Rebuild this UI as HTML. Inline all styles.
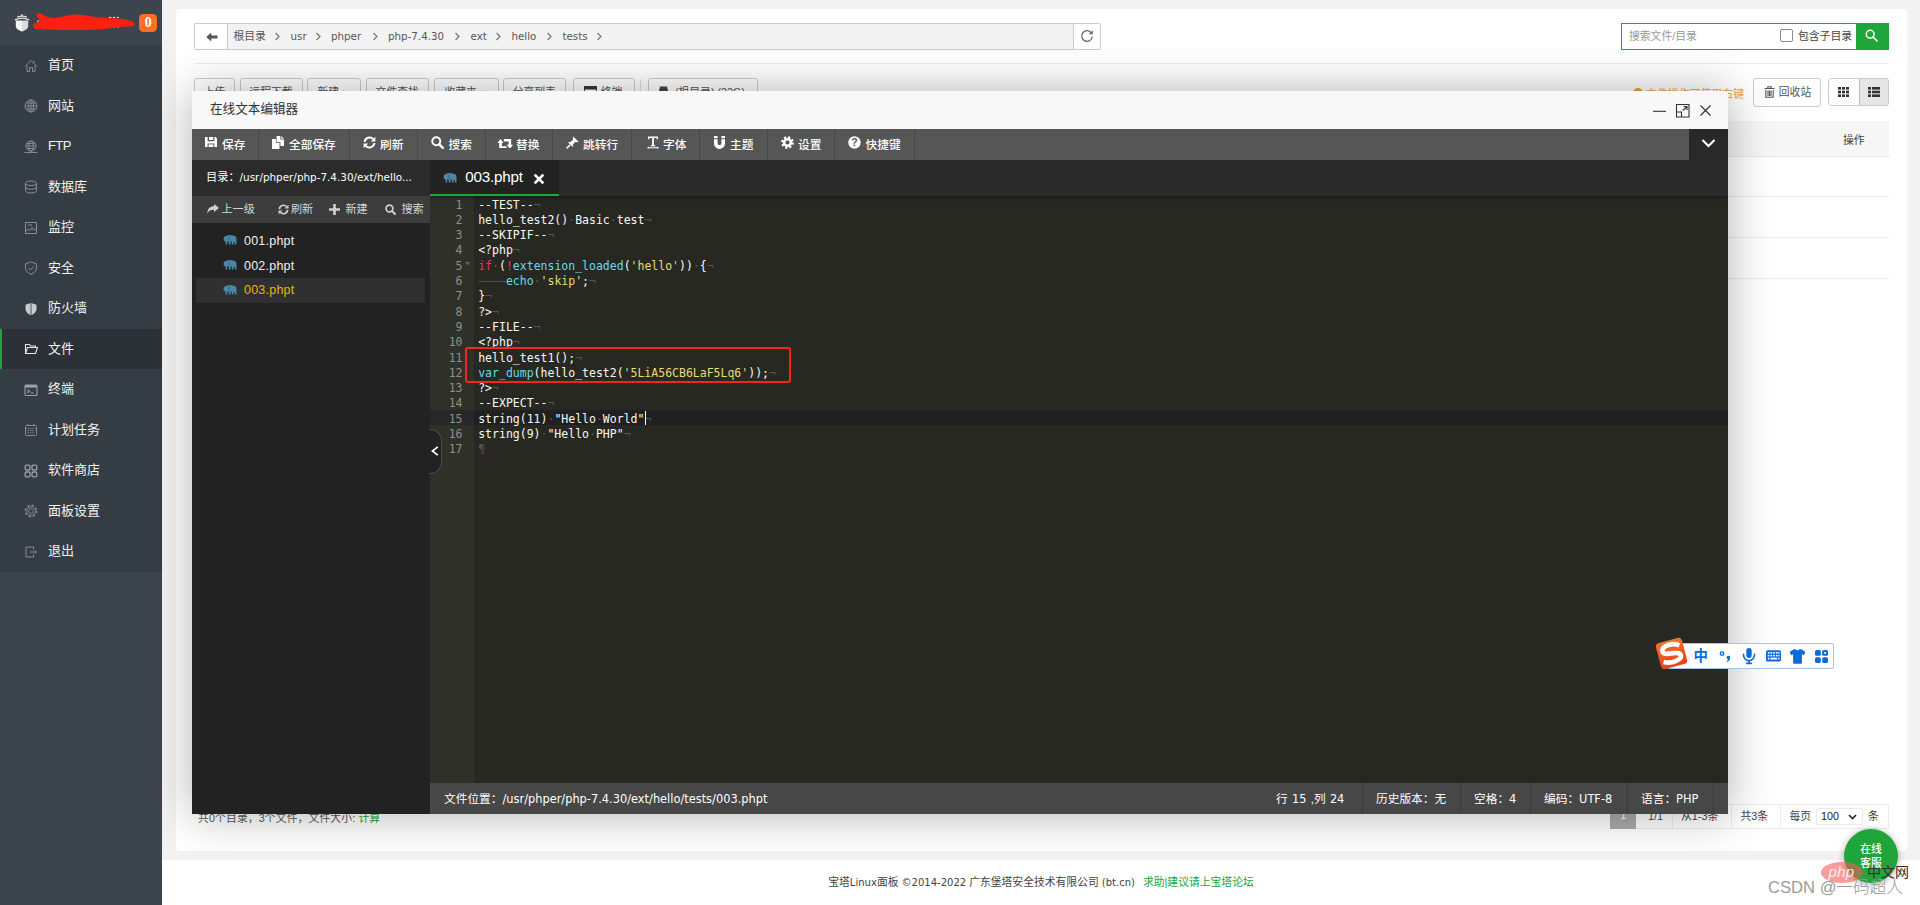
<!DOCTYPE html>
<html lang="zh-CN">
<head>
<meta charset="utf-8">
<title>宝塔Linux面板</title>
<style>
*{box-sizing:border-box;margin:0;padding:0}
html,body{width:1920px;height:905px;overflow:hidden;background:#f2f2f2}
body{font-family:"Liberation Sans","Noto Sans CJK SC",sans-serif;font-size:10.8px;color:#666;position:relative}
.abs{position:absolute}
.la{font-family:"DejaVu Sans","Liberation Sans",sans-serif;font-size:.93em}
svg{display:block}
/* ---------- sidebar ---------- */
#side{position:absolute;left:0;top:0;width:162px;height:905px;background:#3c444d}
#side .hd{position:absolute;left:0;top:0;width:162px;height:45.8px;background:#3c444d}
#side .menu{position:absolute;left:0;top:45.8px;width:162px;height:525.8px;background:#353d44}
#side .mi{margin-top:-.8px;position:absolute;left:0;width:162px;height:40.5px;color:#f2f2f2;font-size:13px;line-height:40.5px;padding-left:48px;white-space:nowrap}
#side .mi.on{background:#2c3138;border-left:2px solid #20a53a;padding-left:46px}
#side .mi svg{position:absolute;left:24px;top:13.5px}
#side .mi.on svg{left:22px}
.badge{position:absolute;left:139px;top:13.7px;width:18.3px;height:18.3px;border-radius:4.5px;background:#fc6d26;color:#fff;font:bold 14px/18px "Liberation Serif",serif;text-align:center}
/* ---------- main ---------- */
#panel{position:absolute;left:176px;top:9px;width:1731px;height:842px;background:#fff;border-radius:4px}
#foot{position:absolute;left:162px;top:860px;width:1758px;height:45px;background:#fff}
#foot .t{position:absolute;left:0;top:15px;width:1758px;text-align:center;font-size:10.8px;line-height:14px;color:#444;white-space:nowrap}
#foot .t a{color:#20a53a;margin-left:8px}

/* path bar */
#path{position:absolute;left:194px;top:23px;width:907px;height:27px;border:1px solid #ccc;border-radius:2px;background:#f3f3f3}
#path .back{position:absolute;left:0;top:0;width:33px;height:25px;background:#fff;border-right:1px solid #ccc}
#path .rf{position:absolute;right:0;top:0;width:27px;height:25px;background:#fff;border-left:1px solid #ccc}
#path .c .la{font-size:.955em}
#path .c{position:absolute;top:0;height:25px;line-height:24px;font-size:10.8px;color:#555;white-space:nowrap}
#path .g{position:absolute;top:8px}
#hr1{position:absolute;left:194px;top:63px;width:1695px;height:1px;background:#ececec}
#search{position:absolute;left:1621px;top:23px;width:268px;height:27px;border:1px solid #20a53a;background:#fff}
#search .ph{position:absolute;left:7px;top:0;line-height:24px;font-size:10.8px;color:#999}
#search .cb{position:absolute;left:158px;top:4.8px;width:13px;height:13.4px;border:1px solid #8a8a8a;border-radius:2px;background:#fff}
#search .lb{position:absolute;left:176px;top:0;line-height:24px;font-size:10.8px;color:#444;white-space:nowrap}
#search .go{position:absolute;right:-1px;top:-1px;width:33px;height:27px;background:#20a53a}
.tb{position:absolute;top:78px;height:27.5px;border:1px solid #ccc;border-radius:3px;background:#fff;font-size:10.8px;color:#555;line-height:26.6px;text-align:center;white-space:nowrap}
#tip{position:absolute;left:1632.5px;top:85.5px;letter-spacing:.1px;font-size:10.8px;line-height:16px;color:#e6a23c;white-space:nowrap}
#thead{position:absolute;left:194px;top:120.5px;width:1695px;height:36px;background:#f6f6f6;border-bottom:1px solid #e6e6e6}
.rl{position:absolute;left:194px;width:1695px;height:1px;background:#ededed}
#pg>span,#pg>div{margin-top:.6px}
#pg{position:absolute;left:1610px;top:803.9px;height:25px;width:279px;border:1px solid #ececec;font-size:10.8px;color:#444;line-height:23px;white-space:nowrap}
#pg>span{position:absolute;top:0}
#pg>i{position:absolute;top:0;width:1px;height:23px;background:#ececec}
#stat{position:absolute;left:198px;top:810.3px;letter-spacing:.12px;font-size:10.8px;line-height:16px;color:#555;white-space:nowrap}
#kf{position:absolute;left:1844px;top:829px;width:54px;height:54px;border-radius:27px;background:#20a53a;color:#fff;font-size:10.8px;line-height:14px;text-align:center;padding-top:13px;font-weight:500;box-shadow:0 1px 7px rgba(0,0,0,.35)}

/* ---------- modal ---------- */
#kf{z-index:5}
#modal{position:absolute;left:192px;top:91px;width:1536px;height:722.6px;background:#f8f8f8;box-shadow:0.9px 0.9px 45px rgba(0,0,0,.3);z-index:10;border-radius:2px 2px 0 0}
#modal .ttl{position:absolute;left:18px;top:0;line-height:37px;font-size:12.6px;color:#333;white-space:nowrap}
#mtb{position:absolute;left:0;top:38px;width:1536px;height:31px;background:#565656}
#mtb .it{position:absolute;top:0;height:31px;border-right:1px solid #484848;color:#fff;font-size:11.7px;font-weight:500;line-height:31.5px;white-space:nowrap}
#mtb .it svg{position:absolute}
#mtb .it>span{position:absolute;top:0}
#mtb .more{position:absolute;left:1497px;top:0;width:39px;height:31px;background:#292929}
#lp{position:absolute;left:0;top:69px;width:238px;height:653.6px;background:#222}
#lp .dir{position:absolute;left:0;top:0;width:238px;height:35.7px;background:#2b2b2b;color:#fff;font-size:11.2px;line-height:35px;padding-left:14px;white-space:nowrap}
#lp .st{position:absolute;left:0;top:35.7px;width:238px;height:27px;background:#3d3d3d;color:#d4d4d4;font-size:11.1px;line-height:27px;white-space:nowrap}
#lp .st>span{position:absolute;top:0}
#lp .st svg{position:absolute}
#lp .f{position:absolute;left:4px;width:229px;height:24.2px;color:#f0f0f0;font-size:12.5px;line-height:22.4px;padding-left:48px;white-space:nowrap;letter-spacing:.22px}
#lp .f.on{background:#303030;color:#e6b700}
#lp .f svg{position:absolute;left:26.8px;top:5.6px}
#lp .f.on svg{top:6.9px}
#ed{position:absolute;left:238px;top:69px;width:1298px;height:653.6px;background:#272822;overflow:hidden}
#ed .tabs{position:absolute;left:0;top:0;width:1298px;height:36px;background:#2a2a2a;box-shadow:0 1px 5px rgba(0,0,0,.45);z-index:2}
#ed .tab{position:absolute;left:0;top:0;width:129px;height:36px;background:#222;border-bottom:2.5px solid #20a53a;color:#fff;font-size:14.6px;line-height:34px;white-space:nowrap}
#ed .gut{position:absolute;left:0;top:36px;width:44px;height:587px;background:#2f3129}
#ed .al{position:absolute;left:0;top:250.2px;width:1298px;height:15.3px;background:#202020}
#ed .alg{position:absolute;left:0;top:250.2px;width:44px;height:15.3px;background:#272727}
#ed .ln,#ed .cl{position:absolute;font-family:"DejaVu Sans Mono","Liberation Mono",monospace;font-size:11.5px;line-height:15.3px;height:15.3px;white-space:pre}
#ed .ln,#ed .cl{margin-top:1.4px}
#ed .ln{left:0;width:32.5px;text-align:right;color:#8f908a}
#ed .cl{left:48.2px;color:#f8f8f2}
#ed .cl i{font-style:normal;color:#55564f}
#ed .cl b{font-weight:normal;color:#f92672}
#ed .cl u{text-decoration:none;color:#66d9ef}
#ed .cl s{text-decoration:none;color:#e6db74}
#sb{position:absolute;left:0;top:623.2px;width:1298px;height:30.4px;background:#474747;color:#fff;font-size:11.7px;line-height:32.5px;white-space:nowrap}
#sb .la{font-size:.975em}
#sb>span{word-spacing:1px;position:absolute;top:0}
#sb>i{position:absolute;top:0;width:1px;height:30.4px;background:#3a3a3a}
#fold{position:absolute;left:237px;top:338px;width:12.8px;height:44.5px;background:#222;border-radius:0 12px 12px 0;z-index:3;border:1px solid #4a4a4a;border-left:0}
#redbox{position:absolute;left:272.5px;top:256px;width:326px;height:35.8px;border:2.4px solid #f5251d;border-radius:3px;z-index:4}

/* ---------- overlays ---------- */
#ime{position:absolute;left:1667px;top:643px;width:167px;height:26px;background:#fff;border:1px solid #a8c3ea;border-radius:2px;z-index:20}
#imes{position:absolute;left:1658px;top:640px;width:27px;height:27px;border-radius:4px;background:linear-gradient(#f4702f,#e8431a);transform:rotate(-15deg);z-index:21}
#imei{position:absolute;left:1690px;top:645px;z-index:22}
#zh{position:absolute;left:1693.5px;top:645.5px;z-index:22;font:bold 14.5px/20px "Liberation Sans","Noto Sans CJK SC",sans-serif;color:#0b6bd8}
#wm1{position:absolute;left:1820.5px;top:862px;width:42px;height:21px;border-radius:50%;background:rgba(243,90,90,.6);z-index:30;color:rgba(255,255,255,.88);font:italic 15px/19px "Liberation Sans",sans-serif;text-align:center;letter-spacing:.3px}
#wm2{position:absolute;left:1867px;top:861px;z-index:30;font:400 14px/22px "Liberation Sans","Noto Sans CJK SC",sans-serif;color:#3b2b2b;white-space:nowrap}
#wm3{position:absolute;left:1768px;top:876px;z-index:30;font:300 16.6px/24px "Liberation Sans","Noto Sans CJK SC",sans-serif;color:#9a9a9a;white-space:nowrap}
</style>
</head>
<body>
<!-- SIDEBAR -->
<div id="side">
  <div class="hd">
    <svg class="abs" style="left:14px;top:13.5px" width="16" height="18" viewBox="0 0 16 18"><path d="M8 0.3 V2.2" stroke="#e6e6e6" stroke-width="1.3"/><path d="M3.2 3.2 Q8 1.2 12.8 3.2 M0.8 5.8 Q8 2.6 15.2 5.8" stroke="#dedede" stroke-width="1.3" fill="none"/><path d="M1.8 6.6 H8 V17.6 C5 16.4 1.8 14.8 1.8 12 Z" fill="#f4f4f4"/><path d="M8 6.6 H14.2 V12 C14.2 14.8 11 16.4 8 17.6 Z" fill="#dcdcdc"/></svg>
    <svg class="abs" style="left:30px;top:10px" width="108" height="24" viewBox="30 10 108 24"><path d="M109 17.4 H119 M109 26.8 H119 M37 21.5 L41 20" stroke="#e4e4e4" stroke-width="1" stroke-dasharray="2.4 1.6"/><path d="M36.6 14.6 C37 12.4 40 12.6 42 14.2 C47 17.4 52 18.6 58 17.6 C66 15.2 76 13.6 84 15 C92 16.8 102 18 114 18.2 C122 18.6 130 19.6 134 22.4 C135.4 24.4 134 26.4 131 26.6 C122 26.6 112 27.4 106 28.8 C96 30 84 30.2 72 30 C60 29.8 48 29.8 38 29.4 C33.6 29.2 32 26.6 33.4 24.2 C35 22.4 38.6 22 41 21 C38.6 19 36.2 17 36.6 14.6 Z" fill="#fd1f10"/></svg>
    <div class="badge">0</div>
  </div>
  <div class="menu">
    <div class="mi" style="top:0.0px"><svg width="14" height="14" viewBox="0 0 14 14"><path d="M1 7.5 L7 1.5 L13 7.5 M3 6.5 V12.5 H5.5 V8.5 H8.5 V12.5 H11 V6.5 M10 2 V4" stroke="#858b92" stroke-width="1" fill="none"/></svg>首页</div>
    <div class="mi" style="top:40.5px"><svg width="14" height="14" viewBox="0 0 14 14"><circle cx="7" cy="7" r="6" stroke="#858b92" stroke-width="1" fill="none"/><ellipse cx="7" cy="7" rx="2.6" ry="6" stroke="#858b92" stroke-width="1" fill="none"/><path d="M1 7 H13 M2 4 H12 M2 10 H12 M7 1 V13" stroke="#858b92" stroke-width="1" fill="none"/></svg>网站</div>
    <div class="mi" style="top:81.0px"><svg width="14" height="14" viewBox="0 0 14 14"><circle cx="7" cy="6" r="5" stroke="#858b92" stroke-width="1" fill="none"/><ellipse cx="7" cy="6" rx="2.2" ry="5" stroke="#858b92" stroke-width="1" fill="none"/><path d="M2 6 H12 M3 3.5 H11 M3 8.5 H11 M0.5 12.5 H13.5 M7 11 V12.5" stroke="#858b92" stroke-width="1" fill="none"/></svg><span style="letter-spacing:-.6px">FTP</span></div>
    <div class="mi" style="top:121.5px"><svg width="14" height="14" viewBox="0 0 14 14"><ellipse cx="7" cy="3.3" rx="5.5" ry="2.3" stroke="#858b92" stroke-width="1" fill="none"/><path d="M1.5 3.3 V10.7 C1.5 13.7 12.5 13.7 12.5 10.7 V3.3 M1.5 7 C1.5 10 12.5 10 12.5 7 M1.5 10.7" stroke="#858b92" stroke-width="1" fill="none"/></svg>数据库</div>
    <div class="mi" style="top:162.0px"><svg width="14" height="14" viewBox="0 0 14 14"><rect x="1.5" y="1.5" width="11" height="11" stroke="#858b92" stroke-width="1" fill="none"/><path d="M2 10 L4.5 8 L6 9.5 L8 6.5 L9.5 9 L12 8 M4 4 H8" stroke="#858b92" stroke-width="1" fill="none"/></svg>监控</div>
    <div class="mi" style="top:202.5px"><svg width="14" height="14" viewBox="0 0 14 14"><path d="M7 1 L12.5 2.8 V7 C12.5 10 10 12 7 13.3 C4 12 1.5 10 1.5 7 V2.8 Z M4.5 7 L6.5 9 L10 5.2" stroke="#858b92" stroke-width="1" fill="none"/></svg>安全</div>
    <div class="mi" style="top:243.0px"><svg width="14" height="14" viewBox="0 0 14 14"><path d="M7 1 L12.5 2.8 V7 C12.5 10 10 12 7 13.3 C4 12 1.5 10 1.5 7 V2.8 Z" fill="#c9ccce"/><path d="M7 1 V13.3" stroke="#353d44" stroke-width="0.8"/></svg>防火墙</div>
    <div class="mi on" style="top:283.5px"><svg width="14" height="14" viewBox="0 0 14 14"><path d="M1.5 11.5 V2.5 H5.5 L6.5 4 H11.5 V5.5 M1.5 11.5 L3.5 5.5 H13.5 L11.5 11.5 Z" stroke="#e8e8e8" stroke-width="1.1" fill="none"/></svg>文件</div>
    <div class="mi" style="top:324.0px"><svg width="14" height="14" viewBox="0 0 14 14"><rect x="1" y="2" width="12" height="10.5" rx="1" stroke="#9ba0a6" stroke-width="1.1" fill="none"/><rect x="1" y="2" width="12" height="2.6" fill="#9ba0a6"/><path d="M3.4 6.6 L5.6 8.2 L3.4 9.8 M6.6 10 H9.6" stroke="#9ba0a6" stroke-width="1.1" fill="none"/></svg>终端</div>
    <div class="mi" style="top:364.5px"><svg width="14" height="14" viewBox="0 0 14 14"><rect x="1.5" y="2.5" width="11" height="10" rx="1" stroke="#858b92" stroke-width="1" fill="none"/><path d="M1.5 5.5 H12.5 M4 1 V3.5 M10 1 V3.5 M3.5 7.5 H10.5 M3.5 9.8 H10.5" stroke="#858b92" stroke-width="1" fill="none" stroke-dasharray="1.4 1"/></svg>计划任务</div>
    <div class="mi" style="top:405.0px"><svg width="14" height="14" viewBox="0 0 14 14"><rect x="1.2" y="1.2" width="4.8" height="4.8" rx="1.2" stroke="#9ba0a6" stroke-width="1.3" fill="none"/><rect x="8" y="1.2" width="4.8" height="4.8" rx="1.2" stroke="#9ba0a6" stroke-width="1.3" fill="none"/><rect x="1.2" y="8" width="4.8" height="4.8" rx="1.2" stroke="#9ba0a6" stroke-width="1.3" fill="none"/><rect x="8" y="8" width="4.8" height="4.8" rx="1.2" stroke="#9ba0a6" stroke-width="1.3" fill="none"/></svg>软件商店</div>
    <div class="mi" style="top:445.5px"><svg width="14" height="14" viewBox="0 0 14 14"><circle cx="7" cy="7" r="2.4" stroke="#7d838a" stroke-width="1" fill="none"/><circle cx="7" cy="7" r="4.4" stroke="#7d838a" stroke-width="1" fill="none"/><circle cx="7" cy="7" r="5.6" stroke="#7d838a" stroke-width="1.8" fill="none" stroke-dasharray="2.2 2.2"/></svg>面板设置</div>
    <div class="mi" style="top:486.0px"><svg width="14" height="14" viewBox="0 0 14 14"><path d="M9.5 4.5 V2 H2 V12 H9.5 V9.5 M5.5 7 H12.5 M10.5 5 L12.5 7 L10.5 9" stroke="#858b92" stroke-width="1" fill="none"/></svg>退出</div>
  </div>
</div>
<!-- MAIN -->
<div id="panel"></div>
<div id="path">
  <div class="back"><svg class="abs" style="left:11px;top:8px" width="12" height="10" viewBox="0 0 12 10"><path d="M0.3 5 L5.2 0.6 V3.6 H11.5 V6.4 H5.2 V9.4 Z" fill="#555"/></svg></div>
  <span class="c" style="left:38.5px">根目录</span><span class="c" style="left:95.5px"><span class="la">usr</span></span><span class="c" style="left:136px"><span class="la">phper</span></span><span class="c" style="left:193px"><span class="la">php-7.4.30</span></span><span class="c" style="left:275.5px"><span class="la">ext</span></span><span class="c" style="left:316.5px"><span class="la">hello</span></span><span class="c" style="left:367.5px"><span class="la">tests</span></span><svg class="g" style="left:79.0px" width="7" height="9" viewBox="0 0 7 9"><path d="M1.5 1 L5 4.5 L1.5 8" stroke="#777" stroke-width="1.2" fill="none"/></svg><svg class="g" style="left:120.25px" width="7" height="9" viewBox="0 0 7 9"><path d="M1.5 1 L5 4.5 L1.5 8" stroke="#777" stroke-width="1.2" fill="none"/></svg><svg class="g" style="left:176.5px" width="7" height="9" viewBox="0 0 7 9"><path d="M1.5 1 L5 4.5 L1.5 8" stroke="#777" stroke-width="1.2" fill="none"/></svg><svg class="g" style="left:259.0px" width="7" height="9" viewBox="0 0 7 9"><path d="M1.5 1 L5 4.5 L1.5 8" stroke="#777" stroke-width="1.2" fill="none"/></svg><svg class="g" style="left:300.0px" width="7" height="9" viewBox="0 0 7 9"><path d="M1.5 1 L5 4.5 L1.5 8" stroke="#777" stroke-width="1.2" fill="none"/></svg><svg class="g" style="left:351.0px" width="7" height="9" viewBox="0 0 7 9"><path d="M1.5 1 L5 4.5 L1.5 8" stroke="#777" stroke-width="1.2" fill="none"/></svg><svg class="g" style="left:400.5px" width="7" height="9" viewBox="0 0 7 9"><path d="M1.5 1 L5 4.5 L1.5 8" stroke="#777" stroke-width="1.2" fill="none"/></svg>
  <div class="rf"><svg class="abs" style="left:6px;top:4.6px" width="14" height="14" viewBox="0 0 14 14"><path d="M11.6 4.3 A5.3 5.3 0 1 0 12.3 7.5" stroke="#666" stroke-width="1.3" fill="none"/><path d="M12.8 1.2 V5.3 H8.7 Z" fill="#666"/></svg></div>
</div>
<div id="search"><span class="ph">搜索文件/目录</span><span class="cb"></span><span class="lb">包含子目录</span>
  <div class="go"><svg class="abs" style="left:9px;top:6px" width="13" height="13" viewBox="0 0 13 13"><circle cx="5.2" cy="5.2" r="3.9" stroke="#fff" stroke-width="1.5" fill="none"/><path d="M8.2 8.2 L12 12" stroke="#fff" stroke-width="1.7" stroke-linecap="round"/></svg></div>
</div>
<div id="hr1"></div>
<div class="tb" style="left:194px;width:41px">上传</div>
<div class="tb" style="left:239.5px;width:63px">远程下载</div>
<div class="tb" style="left:306.7px;width:54px">新建<svg style="display:inline-block;vertical-align:0px;margin-left:3px" width="8" height="6" viewBox="0 0 8 6"><path d="M1 1 L4 4.4 L7 1" stroke="#555" stroke-width="1.2" fill="none"/></svg></div>
<div class="tb" style="left:365.7px;width:63px">文件查找</div>
<div class="tb" style="left:433.7px;width:65px">收藏夹<svg style="display:inline-block;vertical-align:0px;margin-left:3px" width="8" height="6" viewBox="0 0 8 6"><path d="M1 1 L4 4.4 L7 1" stroke="#555" stroke-width="1.2" fill="none"/></svg></div>
<div class="tb" style="left:502.8px;width:63px">分享列表</div>
<div class="tb" style="left:572.6px;width:62px;padding-left:16px">终端<svg class="abs" style="left:10px;top:7px" width="13" height="11" viewBox="0 0 13 11"><rect x="0.5" y="0.5" width="12" height="10" fill="#fff" stroke="#444"/><rect x="0.5" y="0.5" width="12" height="3" fill="#333"/></svg></div>
<div class="abs" style="left:640px;top:79px;width:1px;height:26px;background:#ddd"></div>
<div class="tb" style="left:648px;width:110px;padding-left:14px">(根目录) (22G)<svg class="abs" style="left:9px;top:7px" width="11" height="11" viewBox="0 0 11 11"><path d="M2 0.5 H9 L10.5 7 V10.5 H0.5 V7 Z" fill="#444"/></svg></div>
<div id="tip"><b style="display:inline-block;width:10.5px;height:10.5px;border-radius:6px;background:#e6a23c;vertical-align:-1px;margin-right:3px"></b>文件操作可使用右键</div>
<div class="tb" style="left:1753px;width:68px;height:28.5px;line-height:27px;padding-left:16px">回收站<svg class="abs" style="left:10px;top:7px" width="11" height="12" viewBox="0 0 11 12"><path d="M0.5 2.5 H10.5 M3.8 2.3 V0.7 H7.2 V2.3 M1.8 4 V11.3 H9.2 V4 M4 4.5 V10 M5.5 4.5 V10 M7 4.5 V10" stroke="#555" stroke-width="1.1" fill="none"/></svg></div>
<div class="tb" style="left:1828px;width:61px;overflow:hidden"><div class="abs" style="left:29.5px;top:0;width:31px;height:27px;background:#e6e6e6;border-left:1px solid #bbb"></div>
  <svg class="abs" style="left:9px;top:8px" width="11" height="10" viewBox="0 0 11 10"><g fill="#333"><rect x="0" y="0" width="3" height="2.6"/><rect x="4" y="0" width="3" height="2.6"/><rect x="8" y="0" width="3" height="2.6"/><rect x="0" y="3.7" width="3" height="2.6"/><rect x="4" y="3.7" width="3" height="2.6"/><rect x="8" y="3.7" width="3" height="2.6"/><rect x="0" y="7.4" width="3" height="2.6"/><rect x="4" y="7.4" width="3" height="2.6"/><rect x="8" y="7.4" width="3" height="2.6"/></g></svg>
  <svg class="abs" style="left:39px;top:8px" width="12" height="10" viewBox="0 0 12 10"><g fill="#333"><rect x="0" y="0" width="3" height="2.6"/><rect x="4" y="0" width="8" height="2.6"/><rect x="0" y="3.7" width="3" height="2.6"/><rect x="4" y="3.7" width="8" height="2.6"/><rect x="0" y="7.4" width="3" height="2.6"/><rect x="4" y="7.4" width="8" height="2.6"/></g></svg>
</div>
<div id="thead"><span class="abs" style="left:1649px;top:0;line-height:38.5px;font-size:10.8px;color:#444">操作</span></div>
<div class="rl" style="top:196px"></div><div class="rl" style="top:237px"></div><div class="rl" style="top:277.5px"></div>
<div id="stat">共0个目录，3个文件，文件大小: <span style="color:#20a53a">计算</span></div>
<div id="pg"><div class="abs" style="left:-1px;top:-1px;width:26.3px;height:25px;background:#ababab;color:#fff;text-align:center">1</div>
  <span style="left:37px">1/1</span><i style="left:61px"></i><span style="left:70px">从1-3条</span><i style="left:119.5px"></i><span style="left:129.5px">共3条</span><i style="left:169px"></i><span style="left:178.5px">每页</span>
  <div class="abs" style="left:205px;top:3px;width:47px;height:17px;border:1px solid #ebebeb;border-radius:2px;line-height:15px;padding-left:4px;color:#222">100<svg class="abs" style="left:31px;top:4.5px" width="9" height="6" viewBox="0 0 9 6"><path d="M1 1 L4.5 4.5 L8 1" stroke="#222" stroke-width="1.6" fill="none"/></svg></div>
  <span style="left:257px">条</span>
</div>
<div id="kf">在线<br>客服</div>


<!-- MODAL -->
<div id="modal">
 <div class="ttl">在线文本编辑器</div>
 <svg class="abs" style="left:1461px;top:12px" width="60" height="16" viewBox="0 0 60 16"><path d="M0 8.3 H13" stroke="#333" stroke-width="1.1"/><path d="M23.5 1.5 H36 V14 H23.5 Z M23.5 9 H28.5 V14 M30 7.5 L34 3.5 M30.5 3.5 H34 V7" stroke="#333" stroke-width="1.1" fill="none"/><path d="M47.5 2.5 L57.5 12.5 M57.5 2.5 L47.5 12.5" stroke="#333" stroke-width="1.2"/></svg>
 <div id="mtb"><div class="it" style="left:0.0px;width:67.0px"><svg style="left:13px;top:7.6px" width="12" height="10.5" viewBox="0 0 12 10.5"><path d="M0 0 H2.6 V4.2 H9.4 V0 H10.6 L12 1.4 V10.5 H0 Z M4 0 H8.2 V2.9 H4 Z M2.6 6.6 V10.5 H9.4 V6.6 Z" fill="#fff" fill-rule="evenodd"/><path d="M3.6 7.4 H8.4 V10.5 H3.6 Z" fill="#fff"/></svg><span style="left:30px">保存</span></div>
<div class="it" style="left:67.0px;width:91.0px"><svg style="left:13px;top:7.2px" width="12" height="13" viewBox="0 0 12 13"><path d="M0 3 H4 V7 H7.5 V13 H0 Z" fill="#fff"/><path d="M4.6 0 H8.3 V3.6 H12 V10 H8.4 V6.2 H4.6 Z M9.2 0 L12 2.8 H9.2 Z" fill="#fff"/></svg><span style="left:30px">全部保存</span></div>
<div class="it" style="left:158.0px;width:68.0px"><svg style="left:13px;top:7.2px" width="13" height="13" viewBox="0 0 13 13"><path d="M1.6 6 A5 5 0 0 1 10.3 3.2" stroke="#fff" stroke-width="1.9" fill="none"/><path d="M12.4 0.8 V5.4 H7.8 Z" fill="#fff"/><path d="M11.4 7 A5 5 0 0 1 2.7 9.8" stroke="#fff" stroke-width="1.9" fill="none"/><path d="M0.6 12.2 V7.6 H5.2 Z" fill="#fff"/></svg><span style="left:30px">刷新</span></div>
<div class="it" style="left:226.0px;width:68.0px"><svg style="left:12.5px;top:7.2px" width="13" height="13" viewBox="0 0 13 13"><circle cx="5.3" cy="5.3" r="4" stroke="#fff" stroke-width="2" fill="none"/><path d="M8.3 8.3 L11.8 11.8" stroke="#fff" stroke-width="2.4" stroke-linecap="round"/></svg><span style="left:30.5px">搜索</span></div>
<div class="it" style="left:294.0px;width:67.0px"><svg style="left:10.7px;top:9.7px" width="16.4" height="9.8" viewBox="0 0 16 10"><path d="M0 4.2 L3.2 0 L6.4 4.2 H4.5 V7.5 H9.4 V10 H1.9 V4.2 Z M16 5.8 L12.8 10 L9.6 5.8 H11.5 V2.5 H6.6 V0 H14.1 V5.8 Z" fill="#fff"/></svg><span style="left:30px">替换</span></div>
<div class="it" style="left:361.0px;width:79.0px"><svg style="left:13px;top:7.2px" width="13" height="13" viewBox="0 0 13 13"><path d="M7.2 0.4 L12.6 5.8 L11 6.2 L9.2 6 L7 8.6 L6.8 11 L2 6.2 L4.4 6 L7 3.8 L6.8 2 Z" fill="#fff"/><path d="M4.2 8.8 L0.6 12.4" stroke="#fff" stroke-width="1.5"/></svg><span style="left:30px">跳转行</span></div>
<div class="it" style="left:440.0px;width:68.0px"><svg style="left:15px;top:7.2px" width="12" height="13" viewBox="0 0 12 13"><path d="M1 0.5 H11 V3.3 H9.6 V2 H6.9 V9 H8.3 V10.2 H3.7 V9 H5.1 V2 H2.4 V3.3 H1 Z" fill="#fff"/><path d="M0 11.7 L1.8 10.4 V11.2 H10.2 V10.4 L12 11.7 L10.2 13 V12.2 H1.8 V13 Z" fill="#fff"/></svg><span style="left:31px">字体</span></div>
<div class="it" style="left:508.0px;width:68.0px"><svg style="left:14.3px;top:7.2px" width="11" height="13" viewBox="0 0 11 13"><path d="M0 0 H3.6 V2.3 H0 Z M7.4 0 H11 V2.3 H7.4 Z M0 3.3 H3.6 V7.2 A1.9 1.9 0 0 0 7.4 7.2 V3.3 H11 V7.4 A5.5 5.5 0 0 1 0 7.4 Z" fill="#fff"/></svg><span style="left:30px">主题</span></div>
<div class="it" style="left:576.0px;width:67.0px"><svg style="left:13px;top:7.2px" width="13" height="13" viewBox="0 0 13 13"><circle cx="6.5" cy="6.5" r="3.4" stroke="#fff" stroke-width="2.6" fill="none"/><circle cx="6.5" cy="6.5" r="5.3" stroke="#fff" stroke-width="2.2" fill="none" stroke-dasharray="2.1 2.06"/></svg><span style="left:30px">设置</span></div>
<div class="it" style="left:643.0px;width:80.0px"><svg style="left:13px;top:7.2px" width="13" height="13" viewBox="0 0 13 13"><circle cx="6.5" cy="6.5" r="6.2" fill="#fff"/><text x="6.5" y="10.3" font-family="Liberation Sans,sans-serif" font-size="10.5" font-weight="bold" fill="#565656" text-anchor="middle">?</text></svg><span style="left:30.5px">快捷键</span></div>
<div class="more"><svg class="abs" style="left:11.6px;top:9px" width="15" height="11" viewBox="0 0 15 11"><path d="M1.5 2 L7.5 8 L13.5 2" stroke="#fff" stroke-width="2.1" fill="none"/></svg></div></div>
 <div id="lp"><div class="dir">目录：<span class="la">/usr/phper/php-7.4.30/ext/hello...</span></div>
<div class="st">
 <svg style="left:15px;top:8px" width="12" height="10" viewBox="0 0 12 10"><path d="M12 4 L7 0 V2.3 C3 2.3 0.6 4.6 0.2 9.6 C1.6 6.8 3.6 5.8 7 5.8 V8 Z" fill="#d0d0d0"/></svg><span style="left:29.5px">上一级</span>
 <svg style="left:86px;top:8px" width="11" height="11" viewBox="0 0 13 13"><path d="M1.6 6 A5 5 0 0 1 10.3 3.2" stroke="#d0d0d0" stroke-width="2" fill="none"/><path d="M12.4 0.8 V5.4 H7.8 Z" fill="#d0d0d0"/><path d="M11.4 7 A5 5 0 0 1 2.7 9.8" stroke="#d0d0d0" stroke-width="2" fill="none"/><path d="M0.6 12.2 V7.6 H5.2 Z" fill="#d0d0d0"/></svg><span style="left:99px">刷新</span>
 <svg style="left:137px;top:8px" width="11" height="11" viewBox="0 0 11 11"><path d="M4.2 0 H6.8 V4.2 H11 V6.8 H6.8 V11 H4.2 V6.8 H0 V4.2 H4.2 Z" fill="#d0d0d0"/></svg><span style="left:153.5px">新建</span>
 <svg style="left:193px;top:8px" width="11" height="11" viewBox="0 0 13 13"><circle cx="5.3" cy="5.3" r="4" stroke="#d0d0d0" stroke-width="2" fill="none"/><path d="M8.3 8.3 L11.8 11.8" stroke="#d0d0d0" stroke-width="2.4" stroke-linecap="round"/></svg><span style="left:209.5px">搜索</span>
</div>
<div class="f" style="top:69.7px"><svg width="14" height="10" viewBox="0 0 14 10"><path d="M0.5 4 C0.5 1.5 2.5 0.3 5 0.5 C6 -0.1 8 -0.1 9.5 0.6 C12 0.3 13.6 2 13.5 4.5 V9.5 H11.8 V7 H10.6 V9.5 H8.8 V6.5 H7.6 V9.5 H5.8 V6.8 C5 6.8 4.5 6.5 4.2 6 V9.5 H2.6 V6.5 C1.5 6.3 0.5 5.5 0.5 4 Z" fill="#4b87a4"/><path d="M6.3 1.2 C5.6 2.8 5.8 4.8 6.8 6" stroke="#2d566b" stroke-width="0.7" fill="none"/></svg>001.phpt</div>
<div class="f" style="top:94.7px"><svg width="14" height="10" viewBox="0 0 14 10"><path d="M0.5 4 C0.5 1.5 2.5 0.3 5 0.5 C6 -0.1 8 -0.1 9.5 0.6 C12 0.3 13.6 2 13.5 4.5 V9.5 H11.8 V7 H10.6 V9.5 H8.8 V6.5 H7.6 V9.5 H5.8 V6.8 C5 6.8 4.5 6.5 4.2 6 V9.5 H2.6 V6.5 C1.5 6.3 0.5 5.5 0.5 4 Z" fill="#4b87a4"/><path d="M6.3 1.2 C5.6 2.8 5.8 4.8 6.8 6" stroke="#2d566b" stroke-width="0.7" fill="none"/></svg>002.phpt</div>
<div class="f on" style="top:118.4px;height:24.8px;line-height:25.4px"><svg width="14" height="10" viewBox="0 0 14 10"><path d="M0.5 4 C0.5 1.5 2.5 0.3 5 0.5 C6 -0.1 8 -0.1 9.5 0.6 C12 0.3 13.6 2 13.5 4.5 V9.5 H11.8 V7 H10.6 V9.5 H8.8 V6.5 H7.6 V9.5 H5.8 V6.8 C5 6.8 4.5 6.5 4.2 6 V9.5 H2.6 V6.5 C1.5 6.3 0.5 5.5 0.5 4 Z" fill="#4b87a4"/><path d="M6.3 1.2 C5.6 2.8 5.8 4.8 6.8 6" stroke="#2d566b" stroke-width="0.7" fill="none"/></svg>003.phpt</div></div>
 <div id="ed"><div class="tabs"><div class="tab"><span class="abs" style="left:13px;top:12.5px"><svg width="14" height="10" viewBox="0 0 14 10"><path d="M0.5 4 C0.5 1.5 2.5 0.3 5 0.5 C6 -0.1 8 -0.1 9.5 0.6 C12 0.3 13.6 2 13.5 4.5 V9.5 H11.8 V7 H10.6 V9.5 H8.8 V6.5 H7.6 V9.5 H5.8 V6.8 C5 6.8 4.5 6.5 4.2 6 V9.5 H2.6 V6.5 C1.5 6.3 0.5 5.5 0.5 4 Z" fill="#4b87a4"/><path d="M6.3 1.2 C5.6 2.8 5.8 4.8 6.8 6" stroke="#2d566b" stroke-width="0.7" fill="none"/></svg></span><span id="tabtxt" class="abs" style="left:35.3px;top:0;font-size:15.2px;letter-spacing:-.2px">003.phpt</span>
<svg class="abs" style="left:103px;top:12.9px" width="12" height="12" viewBox="0 0 11 11"><path d="M1.5 1.5 L9.5 9.5 M9.5 1.5 L1.5 9.5" stroke="#fff" stroke-width="2.5"/></svg></div></div>
<div class="gut"></div><div class="al"></div><div class="alg"></div>
<div class="ln" style="top:36.2px">1</div><div class="cl" style="top:36.2px">--TEST--<i>¬</i></div>
<div class="ln" style="top:51.5px">2</div><div class="cl" style="top:51.5px">hello_test2()<i>·</i>Basic<i>·</i>test<i>¬</i></div>
<div class="ln" style="top:66.8px">3</div><div class="cl" style="top:66.8px">--SKIPIF--<i>¬</i></div>
<div class="ln" style="top:82.1px">4</div><div class="cl" style="top:82.1px">&lt;?php<i>¬</i></div>
<div class="ln" style="top:97.4px">5</div><div class="cl" style="top:97.4px"><b>if</b><i>·</i>(<b>!</b><u>extension_loaded</u>(<s>'hello'</s>))<i>·</i>{<i>¬</i></div>
<div class="ln" style="top:112.7px">6</div><div class="cl" style="top:112.7px"><i>————</i><u>echo</u><i>·</i><s>'skip'</s>;<i>¬</i></div>
<div class="ln" style="top:128.0px">7</div><div class="cl" style="top:128.0px">}<i>¬</i></div>
<div class="ln" style="top:143.3px">8</div><div class="cl" style="top:143.3px">?&gt;<i>¬</i></div>
<div class="ln" style="top:158.6px">9</div><div class="cl" style="top:158.6px">--FILE--<i>¬</i></div>
<div class="ln" style="top:173.9px">10</div><div class="cl" style="top:173.9px">&lt;?php<i>¬</i></div>
<div class="ln" style="top:189.2px">11</div><div class="cl" style="top:189.2px">hello_test1();<i>¬</i></div>
<div class="ln" style="top:204.5px">12</div><div class="cl" style="top:204.5px"><u>var_dump</u>(hello_test2(<s>'5LiA56CB6LaF5Lq6'</s>));<i>¬</i></div>
<div class="ln" style="top:219.8px">13</div><div class="cl" style="top:219.8px">?&gt;<i>¬</i></div>
<div class="ln" style="top:235.1px">14</div><div class="cl" style="top:235.1px">--EXPECT--<i>¬</i></div>
<div class="ln" style="top:250.4px">15</div><div class="cl" style="top:250.4px">string(11)<i>·</i>"Hello<i>·</i>World"<i>¬</i></div>
<div class="ln" style="top:265.7px">16</div><div class="cl" style="top:265.7px">string(9)<i>·</i>"Hello<i>·</i>PHP"<i>¬</i></div>
<div class="ln" style="top:281.0px">17</div><div class="cl" style="top:281.0px"><i>¶</i></div>

<svg class="abs" style="left:35.4px;top:102.3px" width="5.2" height="3.4" viewBox="0 0 6 4"><path d="M0 0 H6 L3 4 Z" fill="#62635d"/></svg>
<div class="abs" style="left:214.7px;top:251px;width:1px;height:14px;background:#f8f8f0"></div>
<div id="sb"><span style="left:14px">文件位置：<span class="la">/usr/phper/php-7.4.30/ext/hello/tests/003.phpt</span></span>
<span style="left:846px">行 <span class="la">15</span> ,列 <span class="la">24</span></span><i style="left:932px"></i><span style="left:946px">历史版本：无</span><i style="left:1030px"></i><span style="left:1044px">空格：<span class="la">4</span></span><i style="left:1100px"></i><span style="left:1114px">编码：<span class="la">UTF-8</span></span><i style="left:1197px"></i><span style="left:1211px">语言：<span class="la">PHP</span></span><i style="left:1283px"></i></div></div>
 <div id="fold"><svg class="abs" style="left:1.8px;top:16.4px" width="8" height="10" viewBox="0 0 8 10"><path d="M6.8 0.8 L1.4 5 L6.8 9.2" stroke="#fff" stroke-width="1.7" fill="none"/></svg></div>
 <div id="redbox"></div>
</div>
<div id="foot"><div class="t">宝塔<span class="la">Linux</span>面板 <span class="la">©2014-2022</span> 广东堡塔安全技术有限公司 <span class="la">(bt.cn)</span><a>求助|建议请上宝塔论坛</a></div></div>

<!-- IME + watermarks -->
<div id="ime"></div>
<div id="imes"><svg class="abs" style="left:0;top:0" width="27" height="27" viewBox="0 0 27 27"><path d="M23.2 7.6 C17 2.6 5.2 3.6 5.4 9.6 C5.6 15 21.6 11.8 22 17.4 C22.2 22.6 11 23.6 3.6 19.6" stroke="#fff" stroke-width="4.7" fill="none"/></svg></div>
<div id="zh">中</div>
<svg id="imei" width="142" height="22" viewBox="0 0 142 22">
 <g fill="#0b6bd8">
  <circle cx="32" cy="8.6" r="1.7" fill="none" stroke="#0b6bd8" stroke-width="1.4"/>
  <path d="M36.6 12.4 A1.8 1.8 0 1 1 40.2 12.8 C40.2 15 38.8 16.4 37.2 17 L36.7 16.1 C37.6 15.6 38.2 14.8 38.2 14.1 C37.2 14.1 36.6 13.3 36.6 12.4 Z"/>
  <rect x="56.3" y="3" width="5.4" height="10" rx="2.7"/>
  <path d="M53.5 9.3 V10.1 A5.5 5.5 0 0 0 64.5 10.1 V9.3" fill="none" stroke="#0b6bd8" stroke-width="1.6" stroke-linecap="round"/>
  <path d="M59 15.8 V17.8 M56.6 18.4 H61.4" stroke="#0b6bd8" stroke-width="1.6" stroke-linecap="round"/>
  <rect x="76" y="5.3" width="15" height="11.3" rx="1.6"/>
  <g fill="#fff"><rect x="77.8" y="7" width="1.7" height="1.6"/><rect x="80.5" y="7" width="1.7" height="1.6"/><rect x="83.2" y="7" width="1.7" height="1.6"/><rect x="85.9" y="7" width="1.7" height="1.6"/><rect x="88.3" y="7" width="1.2" height="1.6"/>
  <rect x="77.8" y="9.8" width="1.7" height="1.6"/><rect x="80.5" y="9.8" width="1.7" height="1.6"/><rect x="83.2" y="9.8" width="1.7" height="1.6"/><rect x="85.9" y="9.8" width="1.7" height="1.6"/><rect x="88.3" y="9.8" width="1.2" height="1.6"/>
  <rect x="77.8" y="12.7" width="1.7" height="1.8"/><rect x="80.5" y="12.7" width="6.6" height="1.8"/><rect x="88.1" y="12.7" width="1.4" height="1.8"/></g>
  <path d="M99.6 7 L103.6 4.3 H105.6 C106.2 5.6 108.8 5.6 109.4 4.3 H111.4 L115.4 7 L113.8 10.2 L111.9 9.3 V17.6 C111.9 18.4 111.5 18.8 110.8 18.8 H104.2 C103.5 18.8 103.1 18.4 103.1 17.6 V9.3 L101.2 10.2 Z"/>
  <rect x="125" y="5" width="5.8" height="5.8" rx="1.5"/><rect x="132.2" y="5" width="5.8" height="5.8" rx="1.5"/><rect x="125" y="12.2" width="5.8" height="5.8" rx="1.5"/><rect x="132.2" y="12.2" width="5.8" height="5.8" rx="1.5"/>
  <rect x="134.3" y="7" width="1.8" height="1.8" fill="#fff"/>
 </g>
</svg>
<div id="wm1">php</div>
<div id="wm2">中文网</div>
<div id="wm3">CSDN @一码超人</div>
</body>
</html>
